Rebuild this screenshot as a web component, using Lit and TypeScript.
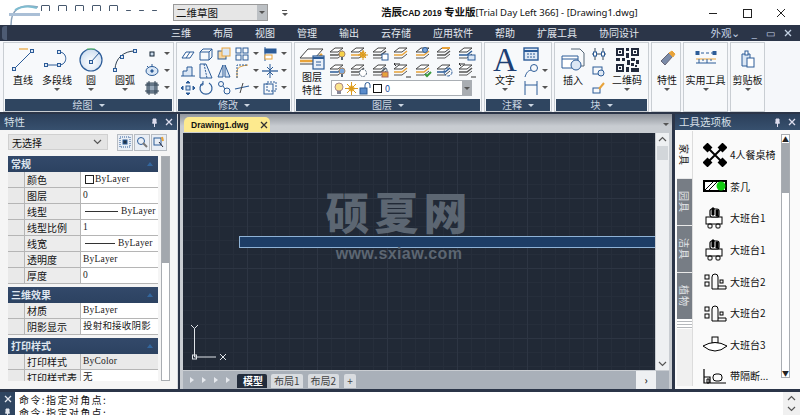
import { LitElement, html, css, svg } from "lit";
import { customElement } from "lit/decorators.js";

const B = "#2c5c98";
const O = "#e8a33a";
const ic = (w: number, h: number, body: unknown) =>
  html`<svg width=${w} height=${h} viewBox="0 0 ${w} ${h}" fill="none" stroke=${B} stroke-width="1">${body}</svg>`;

const dot = (x: number, y: number) => svg`<rect x=${x - 1.5} y=${y - 1.5} width="3" height="3" fill="#dfe9f5" stroke=${B}/>`;

const layer = (accent: string, extra: unknown = svg``) =>
  ic(18, 16, svg`<path d="M1 6 L6 2 H14 L9 6Z" fill="#fff" stroke="#444"/><path d="M1 9 H9 L14 5" stroke=${accent} stroke-width="1.5"/><path d="M1 12 H9 L14 8" stroke="#555"/>${extra}`);

const bulb = (c: string) => svg`<circle cx="13" cy="8" r="3" fill=${c} stroke=${c === "#fff" ? B : "#a86"}/><rect x="12" y="11" width="2" height="3" fill="#567" stroke="none"/>`;
const sun = svg`<circle cx="13" cy="9" r="2.5" fill="#f4b73c" stroke="#d99a20"/><path d="M13 4v10M8 9h10M10 6l6 6M16 6l-6 6" stroke="#d99a20"/>`;
const gear = svg`<circle cx="13" cy="10" r="3.5" fill="#fff" stroke="#567" stroke-dasharray="2 1"/>`;
const lock = svg`<rect x="10" y="9" width="6" height="5" fill="#e8a33a" stroke="#a66"/><path d="M11 9V7a2 2 0 0 1 4 0v2" stroke="#567"/>`;
const box = svg`<rect x="10" y="8" width="6" height="6" fill="#fff" stroke=${B}/>`;
const circ = svg`<circle cx="10" cy="4" r="2.5" fill="#7aa6dc" stroke=${B}/>`;
const check = svg`<path d="M10 11l2 2 4-4" stroke="#3a9a3a" stroke-width="2"/>`;
const bar = svg`<rect x="6" y="1" width="8" height="2" fill=${O} stroke="none"/>`;
const blockR = svg`<rect x="10" y="9" width="7" height="5" fill="#dbe7f5" stroke=${B}/>`;
const swirl = svg`<circle cx="12" cy="9" r="4" stroke=${B} stroke-dasharray="3 1"/>`;
const arrows = svg`<path d="M1 1h6M13 14h5" stroke="#333"/><path d="M3 3L1 1l2-2" stroke="#333"/>`;

const small: Record<string, unknown> = {
  point: ic(14, 14, svg`<rect x="5" y="5" width="4" height="4" fill="#cde" stroke="#123"/>`),
  ellipse: ic(16, 14, svg`<ellipse cx="8" cy="7" rx="6" ry="4.5" fill="#d8e6f5"/><circle cx="8" cy="7" r="1.2" fill=${B}/><path d="M8 0v3M3 2l2 2"/>`),
  hatch: ic(14, 14, svg`<rect x="2" y="2" width="10" height="10" fill="#9ab" stroke="#345"/><path d="M0 4h14M0 10h14M4 0v14M10 0v14" stroke="#345"/>`),
  erase: ic(16, 14, svg`<path d="M2 11 L6 5 H14 L10 11Z" fill="#fff"/><path d="M6 11 L10 5"/>`),
  copy: ic(16, 14, svg`<path d="M2 5h9v8H2zM2 5l3-3h9l-3 3M11 13l3-3V2"/>`),
  mirror: ic(16, 16, svg`<rect x="2" y="5" width="8" height="8" fill="#f6d8a8" stroke=${B}/><rect x="6" y="2" width="8" height="8" fill="#dbe7f5" stroke=${O}/>`),
  array: ic(16, 16, svg`<rect x="2" y="2" width="5" height="5"/><rect x="9" y="2" width="5" height="5"/><rect x="2" y="9" width="5" height="5"/><rect x="9" y="9" width="5" height="5"/>`),
  align: ic(16, 16, svg`<path d="M3 1v14" /><rect x="3" y="3" width="11" height="4" fill=${B}/><rect x="3" y="9" width="7" height="4" fill="#fff" stroke=${O}/>`),
  stretch: ic(16, 14, svg`<path d="M1 12h14M3 12V7h4V3h5v9" fill="#dbe7f5"/>`),
  scale: ic(16, 16, svg`<path d="M2 1v14h12L8 1z" fill="#eef3fa"/><path d="M6 1l3 14" stroke-dasharray="2 1"/>`),
  mir2: ic(16, 16, svg`<path d="M7 2L2 14h5zM9 2l5 12H9z" fill="#dbe7f5"/>`),
  fillet: ic(16, 16, svg`<path d="M3 15V8Q3 3 14 2" stroke=${O}/><path d="M3 15V2h11" stroke-dasharray="2 1"/>`),
  offset: ic(16, 16, svg`<path d="M8 1v14" stroke-width="1"/><path d="M0 8h16" stroke-width="1.3"/><path d="M5 4l3 3 3-3M5 12l3-3 3 3" stroke-width="1"/>`),
  move: ic(16, 16, svg`<rect x="6" y="6" width="4" height="4" fill="#cde"/><path d="M8 1l2 2H6zM8 15l2-2H6zM1 8l2-2v4zM15 8l-2-2v4z" fill=${B}/>`),
  rotate: ic(16, 16, svg`<path d="M5 3a6 6 0 1 0 6 0" stroke-width="1.2"/><path d="M5 1v4H2" />`),
  chain: ic(16, 16, svg`<circle cx="5" cy="4" r="2.5"/><circle cx="11" cy="11" r="3"/><path d="M7 6l2 3"/>`),
  trim: ic(16, 16, svg`<path d="M1 9l14-3" stroke=${B} stroke-width="1.2"/><path d="M9 3l-3 10" stroke="#444"/>`),
  rect: ic(16, 16, svg`<rect x="2" y="4" width="9" height="10"/><rect x="5" y="2" width="9" height="9" stroke-dasharray="2 1"/>`),
  table: ic(16, 14, svg`<rect x="1" y="1" width="14" height="12" fill="#dfe9f5" stroke=${B} stroke-width="1.4"/><path d="M1 4h14" stroke=${B} stroke-width="2"/><path d="M4 7h8M4 10h8" stroke-dasharray="2 1"/>`),
  leader: ic(16, 16, svg`<circle cx="11" cy="5" r="3.5"/><path d="M8 7C4 8 3 11 2 14" />`),
  dim: ic(16, 16, svg`<path d="M2 1v14M14 1v14M2 5h12" />`),
  dimv: ic(14, 14, svg`<path d="M3 1v12M11 1v12M0 7h14" stroke="#345"/><rect x="1.5" y="5" width="3" height="4" fill="#fff"/><rect x="9.5" y="5" width="3" height="4" fill="#fff"/>`),
  edit: ic(14, 14, svg`<rect x="1" y="3" width="9" height="7"/><circle cx="9" cy="9" r="3" fill="#dfe9f5"/>`),
  attr: ic(14, 14, svg`<rect x="1" y="7" width="7" height="5"/><path d="M7 8l5-6" stroke=${O} stroke-width="2"/>`),
};

const big: Record<string, unknown> = {
  line: ic(26, 24, svg`<path d="M4 21 L22 3" stroke=${B}/><path d="M9 1 h9" stroke=${O} stroke-width="1.2"/>${dot(4, 21)}${dot(22, 3)}`),
  pline: ic(28, 24, svg`<path d="M3 17 H16 C25 17 25 4 16 4" stroke=${B}/>${dot(3, 17)}${dot(16, 17)}${dot(16, 4)}`),
  circle: ic(26, 26, svg`<defs><radialGradient id="cg" cx=".5" cy=".6" r=".7"><stop offset="0" stop-color="#fff"/><stop offset="1" stop-color="#c5d8ee"/></radialGradient></defs><circle cx="13" cy="13" r="11" fill="url(#cg)" stroke=${B} stroke-width="1.2"/><path d="M9 2h8" stroke="#6c6"/><path d="M13 15L21 6" stroke=${B}/>${dot(13, 15)}`),
  arc: ic(26, 24, svg`<path d="M3 22 C3 10 12 3 23 3" stroke="#345"/>${dot(3, 22)}${dot(10, 9)}${dot(23, 3)}`),
  layers: ic(26, 24, svg`<path d="M1 12 L9 3 H24 L16 12Z" fill="#fff" stroke="#444"/><path d="M1 15 H16 L23 8" stroke=${O} stroke-width="2.5"/><path d="M1 18H15" stroke="#444"/><rect x="14" y="10" width="11" height="13" fill="#eaf0f8" stroke=${B} stroke-width="1.2"/><path d="M14 12h11" stroke=${B} stroke-width="2"/><path d="M17 16h5M17 19h5" stroke=${B}/>`),
  text: html`<span class="bigA">A</span>`,
  insert: ic(24, 24, svg`<path d="M10 1h9l4 4v13h-6" stroke="#567"/><path d="M1 8h16v12H1z" fill="#fff"/><path d="M1 11h16" stroke=${B}/><circle cx="15" cy="17" r="5" fill="#dbe7f5" />`),
  qr: html`<svg width="23" height="24" viewBox="0 0 23 24" fill="#222a3c"><path d="M0 0h8v8H0zM2 2v4h4V2zM15 0h8v8h-8zM17 2v4h4V2zM0 16h8v8H0zM2 18v4h4v-4zM10 0h3v3h-3zM10 5h3v5h-3zM0 10h4v3H0zM6 10h3v3H6zM15 10h4v3h-4zM20 12h3v4h-3zM11 12h3v5h-3zM15 15h3v3h-3zM10 19h3v5h-3zM15 20h8v4h-8zM19 17h2v2h-2z" fill-rule="evenodd"/><path d="M3 3h2v2H3zM18 3h2v2h-2zM3 19h2v2H3z"/></svg>`,
  prop: ic(18, 18, svg`<path d="M3 11l8-8 4 3-8 9z" fill="#7a8ba8" stroke="#667"/><path d="M11 3l3-2 3 3-2 3z" fill=${O} stroke=${O}/>`),
  util: ic(22, 16, svg`<path d="M1 3h20" stroke-dasharray="3 2"/><rect x="1" y="1.5" width="3" height="3" fill=${B}/><rect x="18" y="1.5" width="3" height="3" fill=${B}/><path d="M1 9h20" stroke=${O}/><path d="M1 13h20"/><path d="M4 9v4M8 9v2M12 9v4M16 9v2"/>`),
  clip: ic(16, 18, svg`<path d="M2 4h8v12H2z" fill="#dbe7f5"/><rect x="5" y="1" width="3" height="4" fill="#fff"/><rect x="7" y="8" width="7" height="9" fill="#fff"/>`),
};

const furn: Record<string, unknown> = {
  dining: html`<svg width="24" height="24" viewBox="0 0 24 24"><path d="M4 4L20 20M20 4L4 20" stroke="#000" stroke-width="2"/><g fill="#000"><rect x="1" y="1" width="7" height="7" transform="rotate(45 4.5 4.5)"/><rect x="16" y="1" width="7" height="7" transform="rotate(45 19.5 4.5)"/><rect x="1" y="16" width="7" height="7" transform="rotate(45 4.5 19.5)"/><rect x="16" y="16" width="7" height="7" transform="rotate(45 19.5 19.5)"/></g></svg>`,
  tea: html`<svg width="24" height="13" viewBox="0 0 24 13"><rect x="1" y="1" width="22" height="10" fill="#fff" stroke="#000" stroke-width="2"/><path d="M2 10L10 2M6 10L14 2" stroke="#000"/><circle cx="18" cy="6" r="4.5" fill="#1c1"/></svg>`,
  desk1: html`<svg width="20" height="22" viewBox="0 0 20 22" fill="none" stroke="#000"><rect x="1" y="10" width="16" height="7" fill="#fff"/><rect x="5" y="2" width="9" height="8" rx="2" fill="#fff" stroke-width="1.2"/><path d="M7 1h2v7H7z M11 3h2v6h-2z" fill="#000"/><rect x="3" y="17" width="4" height="4" rx="1"/><rect x="11" y="17" width="4" height="4" rx="1"/></svg>`,
  desk2: html`<svg width="24" height="18" viewBox="0 0 24 18" fill="none" stroke="#000"><rect x="2" y="3" width="4" height="4"/><rect x="2" y="10" width="4" height="4"/><path d="M9 17V5a3 3 0 0 1 6 0v12M9 17h14v-3h-8"/><rect x="17" y="8" width="3" height="3"/></svg>`,
  desk3: html`<svg width="26" height="16" viewBox="0 0 26 16" fill="none" stroke="#000"><rect x="10" y="1" width="6" height="6"/><path d="M1 10Q13 3 25 10Q13 20 1 10z" fill="#fff"/></svg>`,
  screen: html`<svg width="24" height="16" viewBox="0 0 24 16" fill="none" stroke="#000"><path d="M1 1v14h22M1 9h6v6" stroke-width="1.2"/><rect x="10" y="6" width="9" height="7" rx="3"/><path d="M4 11h2v4H4z"/></svg>`,
};

const PROPS: Array<{ h: string; rows: Array<[string, unknown, boolean?]> }> = [
  { h: "常规", rows: [
    ["颜色", html`<span class="swatch"></span>ByLayer`],
    ["图层", "0"],
    ["线型", html`<span class="ln w38"></span><span class="rt">ByLayer</span>`],
    ["线型比例", "1"],
    ["线宽", html`<span class="ln w31"></span><span class="rt">ByLayer</span>`],
    ["透明度", "ByLayer"],
    ["厚度", "0"],
  ]},
  { h: "三维效果", rows: [["材质", "ByLayer"], ["阴影显示", "投射和接收阴影"]] },
  { h: "打印样式", rows: [["打印样式", "ByColor", true], ["打印样式表", "无"]] },
];

const TOOLS: Array<[string, string]> = [
  ["dining", "4人餐桌椅"], ["tea", "茶几"], ["desk1", "大班台1"], ["desk1", "大班台1"],
  ["desk2", "大班台2"], ["desk2", "大班台2"], ["desk3", "大班台3"], ["screen", "带隔断..."],
];

const MENU = ["三维", "布局", "视图", "管理", "输出", "云存储", "应用软件", "帮助", "扩展工具", "协同设计"];

@customElement("app-root")
export class AppRoot extends LitElement {
  static styles = css`
    :host { display: block; width: 800px; height: 415px; overflow: hidden; background: #2b3548;
      font-family: "Noto Sans CJK SC", "Liberation Sans", sans-serif; font-size: 10px; color: #111; }
    * { box-sizing: border-box; }
    svg { display: block; flex: none; }
    .app { display: flex; flex-direction: column; height: 415px; }

    .title { height: 25px; background: #fff; display: flex; align-items: center; position: relative; flex: none; }
    .logo { width: 33px; height: 25px; margin-left: 8px; flex: none; }
    .qat { display: flex; gap: 8px; width: 132px; height: 6px; overflow: hidden; margin-top: -9px; align-items: flex-start; flex: none; }
    .qat i { display: block; width: 9px; height: 12px; border: 1px solid #48596e; border-radius: 1px; flex: none; }
    .qat i.d { height: 1px; border-width: 1px 0 0; margin-top: 5px; width: 5px; }
    .combo { width: 95px; height: 17px; background: #e6e6e6; border: 1px solid #9a9a9a; display: flex; align-items: center; padding-left: 2px; font-size: 10.5px; justify-content: space-between; flex: none; }
    .combo b { width: 10px; height: 15px; background: #bcc0c4; display: flex; align-items: center; justify-content: center; font-weight: normal; }
    .tri { width: 0; height: 0; border: 3px solid transparent; border-top: 3px solid #555; border-bottom: 0; display: block; flex: none; }
    .more { margin-left: 14px; width: 5px; flex: none; }
    .more::before { content: ""; display: block; height: 2px; border-top: 1px solid #555; }
    .cap { position: absolute; left: 381px; top: 4px; white-space: nowrap; font-size: 10px; line-height: 16px; }
    .cap b { font-size: 10.5px; }
    .cap b em { font: bold 8.5px "Liberation Sans", sans-serif; }
    .cap span { font-family: "Noto Sans", "Liberation Sans", sans-serif; font-size: 9.5px; }
    .win { margin-left: auto; display: flex; align-items: center; flex: none; }
    .win svg { margin-left: 24px; }
    .win svg.lastw { margin-right: 14px; }

    .menu { height: 16px; background: #2b3548; color: #e3e8ef; display: flex; align-items: center; padding-left: 171px; gap: 22px; flex: none; position: relative; line-height: 16px; }
    .menu .edge { position: absolute; left: 2px; top: 1px; width: 5px; height: 14px; background: #4d5b73; border-radius: 3px 0 0 3px; }
    .wnd { margin-left: auto; display: flex; align-items: center; gap: 9px; padding-right: 8px; color: #c4d2e4; }
    .wnd .look { font-size: 10.5px; margin-right: 2px; }

    .ribbon { height: 72px; background: #f5f7fa; display: flex; gap: 2px; padding: 1px 0 0 3px; flex: none; border-bottom: 1px solid #2b3548; }
    .panel { border: 1px solid #c9ced3; background: #f7f9fb; display: flex; flex-direction: column; flex: none; }
    .pbody { flex: 1; display: flex; padding: 2px 2px 0; min-height: 0; }
    .pbody.flush { padding-left: 0; padding-right: 0; }
    .plabel { height: 12px; background: #2f4560; color: #ccd6e2; display: flex; align-items: center; justify-content: center; gap: 6px; line-height: 12px; margin: 0 1px; flex: none; }
    .plabel .tri { border-top-color: #ccd6e2; }
    .p1 { width: 171px; } .p2 { width: 116px; } .p3 { width: 188px; } .p4 { width: 68px; }
    .p5 { width: 95px; } .p6 { width: 30px; } .p7 { width: 45px; } .p8 { width: 35px; }
    .bigb { display: flex; flex-direction: column; align-items: center; width: 34px; flex: none; line-height: 13px; white-space: nowrap; }
    .ic { height: 27px; display: flex; align-items: center; justify-content: center; margin-top: 1px; flex: none; }
    .ic.short { height: 24px; }
    .ic.top { align-items: flex-start; padding-top: 4px; }
    .bigb label { display: block; }
    .bigb .tri { margin-top: 2px; }
    .w26 { width: 26px; } .w29 { width: 29px; } .w30 { width: 30px; } .w36 { width: 36px; } .w39 { width: 39px; } .w40 { width: 40px; }
    .cols { display: grid; grid-auto-rows: 17px; align-items: center; justify-items: center; }
    .c-draw { grid-template-columns: 18px 12px; margin-left: 1px; }
    .c-mod { grid-template-columns: 18px 18px 18px 18px 10px 18px 10px; }
    .c-ann { grid-template-columns: 16px 12px; }
    .c-blk { grid-template-columns: 16px; }
    .layers { display: flex; flex-direction: column; }
    .lgrid { display: grid; grid-template-columns: repeat(7, 21.5px); grid-auto-rows: 17px; justify-items: center; align-items: center; }
    .ldrop { margin: 1px 0 0 4px; width: 141px; height: 16px; border: 1px solid #a9aeb4; background: #fff; display: flex; align-items: center; gap: 1px; padding-left: 2px; font-size: 9px; color: #1a4fa0; }
    .ldrop .sq { width: 9px; height: 9px; border: 1px solid #111; background: #fff; margin-right: 2px; }
    .ldrop b { margin-left: auto; width: 9px; height: 14px; background: #a9adb2; display: flex; align-items: center; justify-content: center; }
    .bigA { font: 33px/28px "Liberation Serif", serif; color: #1d3f73; }
    .ln2 { line-height: 13px; text-align: center; white-space: normal; width: 22px; }

    .main { flex: 1; display: flex; min-height: 0; background: #2b3548; padding-top: 1px; }
    .dock { display: flex; flex-direction: column; flex: none; background: #f2f2f2; }
    .left { width: 178px; border-right: 1px solid #d8dbe0; }
    .dhead { height: 16px; background: linear-gradient(#2b3f5a, #37506e); color: #d8e0ea; display: flex; align-items: center; padding: 0 4px; font-size: 10.5px; line-height: 16px; flex: none; }
    .dhead .pin { margin-left: auto; display: flex; gap: 7px; align-items: center; }
    .lbody { flex: 1; display: flex; flex-direction: column; padding: 4px 8px 8px 8px; min-height: 0; background: #f5f5f5; }
    .selrow { display: flex; align-items: center; height: 16px; margin-bottom: 6px; flex: none; }
    .sel { width: 100px; height: 16px; background: #e4e4e4; border: 1px solid #d0d0d0; display: flex; align-items: center; padding: 0 5px 0 3px; justify-content: space-between; }
    .sbtns { display: flex; margin-left: 9px; gap: 1px; }
    .sbtns span { width: 16px; height: 17px; background: #e9eef5; border: 1px solid #b7bcc2; display: flex; align-items: center; justify-content: center; }
    .propwrap { flex: 1; display: flex; min-height: 0; gap: 3px; }
    .grid { width: 150px; flex: none; overflow: hidden; }
    .ghead { height: 16px; background: linear-gradient(#33496a, #2c4261); color: #dfe6ef; font-weight: bold; display: flex; align-items: center; justify-content: space-between; padding: 0 5px 0 3px; line-height: 16px; font-size: 10px; }
    .ghead i { width: 0; height: 0; border: 3px solid transparent; border-bottom: 4px solid #33669e; border-top: 0; }
    .gsec { margin-bottom: 3px; }
    .row { display: flex; height: 16px; border-bottom: 1px solid #b5b5b5; background: #e9e9e9; padding-left: 16px; line-height: 15px; }
    .row .k { width: 57px; padding-left: 2px; border-left: 1px solid #b5b5b5; border-right: 1px solid #b5b5b5; flex: none; background: #ececec; }
    .row .v { flex: 1; background: #fff; padding-left: 2px; font-family: "Liberation Serif", "Noto Sans CJK SC", serif; font-size: 9.5px; letter-spacing: .2px; display: flex; align-items: center; white-space: nowrap; overflow: hidden; color: #222; }
    .row.gr .v { background: #e9e9e9; }
    .swatch { width: 9px; height: 9px; border: 1px solid #222; margin: 0 1px 0 2px; }
    .ln { height: 1px; background: #333; margin-left: 2px; flex: none; }
    .w38 { width: 33px; } .w31 { width: 30px; }
    .rt { margin-left: 3px; }
    .sb { width: 9px; flex: none; background: #fff; border: 1px solid #a9adb2; }
    .sb::before { content: ""; display: block; height: 106px; background: #a3a8ae; }

    .center { flex: 1; margin-left: 2px; margin-right: 3px; display: flex; flex-direction: column; min-width: 0; background: linear-gradient(#8f949c, #c8ccd1 12px, #c9cdd2); }
    .tabs { height: 18px; display: flex; align-items: flex-end; padding-left: 4px; flex: none; justify-content: space-between; }
    .tabs .dd { margin: 0 3px 6px 0; }
    .doc { width: 86px; height: 15px; background: #fdea8e; border-radius: 5px 5px 0 0; display: flex; align-items: center; justify-content: space-between; padding: 0 2px 0 7px; font-family: "Liberation Sans", sans-serif; font-size: 8.5px; font-weight: bold; }
    .canvaswrap { flex: 1; display: flex; padding: 1px 3px 0; min-height: 0; }
    .canvas { flex: 1; position: relative; overflow: hidden; background-color: #212936;
      background-image:
        linear-gradient(90deg, #2d3543 1px, transparent 1px),
        linear-gradient(#2d3543 1px, transparent 1px),
        linear-gradient(90deg, #262e3b 1px, transparent 1px),
        linear-gradient(#262e3b 1px, transparent 1px);
      background-size: 70px 70px, 70px 70px, 14px 14px, 14px 14px;
      background-position: -6px -5px; }
    .vs { width: 13px; margin-left: 1px; background: #eef0f2; display: flex; flex-direction: column; align-items: center; justify-content: space-between; padding: 3px 0; flex: none; position: relative; }
    .vs .th { position: absolute; left: 1px; right: 1px; top: 13px; height: 14px; background: #d2d6da; }
    .bar { position: absolute; left: 56px; right: 0; top: 103px; height: 12px; background: #1d3d66; border: 1px solid #8fb2d6; border-right: 0; }
    .mark { position: absolute; left: 142px; top: 50px; width: 148px; text-align: center; color: #5c6672; }
    .mark h1 { margin: 0; font-size: 44px; line-height: 56px; font-weight: 900; letter-spacing: 5px; white-space: nowrap; }
    .mark p { margin: 6px 0 0; font: bold 16px/18px "Liberation Sans", sans-serif; letter-spacing: .4px; white-space: nowrap; }
    .ucs { position: absolute; left: 6px; top: 191px; }
    .ltabs { height: 18px; display: flex; align-items: center; flex: none; padding-left: 4px; background: #a9b0b9; position: relative; margin: 1px 3px 0; color: #333; }
    .nav { display: flex; gap: 8px; width: 50px; padding-left: 3px; }
    .nav i { width: 4px; height: 6px; border-left: 4px solid #e6e9ee; border-top: 3px solid transparent; border-bottom: 3px solid transparent; }
    .lt { height: 14px; line-height: 14px; padding: 0 3px; background: #d9dce0; border-radius: 2px 2px 0 0; margin-right: 5px; margin-top: 2px; color: #444; }
    .lt.on { background: #222c3c; color: #fff; font-weight: bold; padding: 0 4px 0 6px; margin-right: 4px; }
    .ltabs .gt { margin-left: auto; width: 20px; text-align: center; font-weight: bold; color: #333; background: #eef0f2; height: 100%; margin-right: 13px; line-height: 18px; }

    .right { width: 125px; background: #f5f5f5; }
    .rbody { flex: 1; display: flex; min-height: 0; padding: 1px 0 3px 2px; background: #fafafa; overflow: hidden; }
    .vt { width: 15px; flex: none; display: flex; flex-direction: column; background: #f0f0f0; }
    .vt span { writing-mode: vertical-rl; text-orientation: sideways; display: flex; align-items: center; justify-content: center; background: #777d85; color: #e4e6ea; border-top: 1px solid #e8e8e8; line-height: 15px; font-size: 10px; letter-spacing: 1px; flex: none; height: 47px; }
    .vt span.on { background: #fafafa; color: #222; border: 0; }
    .vt .st { height: 10px; background: repeating-linear-gradient(#fff 0 2px, #b5b8bc 2px 3px); flex: none; }
    .tools { flex: 1; display: flex; flex-direction: column; overflow: hidden; padding-top: 8px; border-left: 1px solid #dcdcdc; }
    .titem { height: 31.6px; display: flex; align-items: center; flex: none; white-space: nowrap; font-size: 10px; }
    .titem .tic { width: 37px; display: flex; justify-content: center; padding-left: 6px; flex: none; }
    .rsb { width: 9px; margin: 3px 10px 8px 0; flex: none; background: #fff; border: 1px solid #a9adb2; display: flex; flex-direction: column; align-items: center; justify-content: space-between; position: relative; }
    .rsb .t { height: 50px; width: 7px; background: #a3a8ae; position: absolute; top: 8px; left: 0; }
    .arr { font-size: 7px; line-height: 8px; height: 8px; color: #222; }

    .cmd { height: 26px; flex: none; display: flex; background: #fff; border-top: 3px solid #2b3548; }
    .cmdl { width: 15px; background: #2f4560; color: #e4e8ef; display: flex; flex-direction: column; align-items: center; gap: 5px; padding-top: 3px; flex: none; }
    .cmdt { flex: 1; padding: 1px 0 0 4px; line-height: 13px; letter-spacing: 1.4px; overflow: hidden; font-size: 10px; }
    .cmdt div { height: 13px; white-space: nowrap; }
    .cmds { width: 17px; background: #f0f0f0; color: #555; display: flex; flex-direction: column; align-items: center; justify-content: space-between; flex: none; padding: 3px 0; }
  `;

  private icw(c: unknown, cls = "") { return html`<div class="ic ${cls}">${c}</div>`; }

  render() {
    const chev = (up: boolean) => html`<svg width="9" height="6" viewBox="0 0 9 6" fill="none" stroke="#555" stroke-width="1.2"><path d=${up ? "M1 5L4.5 1.5L8 5" : "M1 1L4.5 4.5L8 1"}/></svg>`;
    const x = (c: string) => html`<svg width="8" height="8" viewBox="0 0 8 8" stroke=${c} stroke-width="1.3"><path d="M1 1L7 7M7 1L1 7"/></svg>`;
    const pin = (c: string) => html`<svg width="7" height="9" viewBox="0 0 7 9" fill=${c} stroke=${c}><path d="M2 1h3v4H2zM1 5h5M3.5 5v4" /></svg>`;
    const tri = html`<i class="tri"></i>`;
    const labelBar = (t: string) => html`<div class="plabel">${t}${tri}</div>`;
    return html`<div class="app">
      <div class="title">
        <svg class="logo" viewBox="0 0 33 25" fill="none"><path d="M3 25 C3 10 11 3 30 7" stroke="#8aa2ba" stroke-width="1.5"/><path d="M1 14.5h31" stroke="#aabfd6" stroke-width="3"/><path d="M7 10 q10-6 22-2" stroke="#7fbcd0" stroke-width="2"/></svg>
        <div class="qat"><i></i><i></i><i></i><i></i><i></i><i class="d"></i><i class="d"></i><i class="d"></i></div>
        <div class="combo">二维草图<b>${tri}</b></div>
        <div class="more">${tri}</div>
        <div class="cap"><b>浩辰<em>CAD 2019 </em>专业版</b><span>[Trial Day Left 366] - [Drawing1.dwg]</span></div>
        <div class="win">
          <svg width="10" height="10" viewBox="0 0 10 10" stroke="#222"><path d="M1 5.5H9"/></svg>
          <svg width="10" height="10" viewBox="0 0 10 10" stroke="#222" fill="none"><rect x="1.5" y="1.5" width="8" height="8"/></svg>
          <svg class="lastw" width="10" height="10" viewBox="0 0 10 10" stroke="#222"><path d="M1 1L9 9M9 1L1 9"/></svg>
        </div>
      </div>
      <div class="menu"><i class="edge"></i>${MENU.map((m) => html`<span>${m}</span>`)}
        <div class="wnd"><span class="look">外观⌄</span><span>_</span><span>▭</span>${x("#c4d2e4")}</div>
      </div>
      <div class="ribbon">
        <div class="panel p1"><div class="pbody">
          <div class="bigb">${this.icw(big.line)}<label>直线</label></div>
          <div class="bigb">${this.icw(big.pline)}<label>多段线</label>${tri}</div>
          <div class="bigb">${this.icw(big.circle)}<label>圆</label>${tri}</div>
          <div class="bigb">${this.icw(big.arc)}<label>圆弧</label>${tri}</div>
          <div class="cols c-draw">${small.point}${tri}${small.ellipse}${tri}${small.hatch}${tri}</div>
        </div>${labelBar("绘图")}</div>
        <div class="panel p2"><div class="pbody">
          <div class="cols c-mod">
            ${small.erase}${small.copy}${small.mirror}${small.array}${tri}${small.align}${tri}
            ${small.stretch}${small.scale}${small.mir2}${small.fillet}${tri}${small.offset}${tri}
            ${small.move}${small.rotate}${small.chain}${small.trim}${tri}${small.rect}${tri}
          </div>
        </div>${labelBar("修改")}</div>
        <div class="panel p3"><div class="pbody">
          <div class="bigb w30">${this.icw(big.layers, "short")}<label class="ln2">图层特性</label></div>
          <div class="layers">
            <div class="lgrid">
              ${layer("#555", bulb("#f6d24a"))}${layer(O, sun)}${layer("#555", box)}${layer(O)}${layer(O, circ)}${layer("#555", bar)}${layer(B, blockR)}
              ${layer(B, bulb("#7aa6dc"))}${layer("#555", gear)}${layer("#555", lock)}${layer(O, arrows)}${layer(O, check)}${layer(B, swirl)}${layer("#555", arrows)}
            </div>
            <div class="ldrop">
              <svg width="10" height="13" viewBox="0 0 10 13"><circle cx="5" cy="5" r="4" fill="#fbe38c" stroke="#a88"/><rect x="3" y="9" width="4" height="3" fill="#889"/></svg>
              <svg width="13" height="13" viewBox="0 0 13 13"><circle cx="6.5" cy="6.5" r="3" fill="#f4b73c"/><path d="M6.5 0v13M0 6.5h13M2 2l9 9M11 2l-9 9" stroke="#d99a20"/></svg>
              <svg width="13" height="13" viewBox="0 0 13 13" fill="none" stroke=${B}><rect x="1" y="6" width="7" height="6" fill="#5a8ccc"/><path d="M6 6V3a2.5 2.5 0 0 1 5 0v3"/></svg>
              <span class="sq"></span>0<b>${tri}</b>
            </div>
          </div>
        </div>${labelBar("图层")}</div>
        <div class="panel p4"><div class="pbody">
          <div class="bigb w36">${this.icw(big.text)}<label>文字</label>${tri}</div>
          <div class="cols c-ann">${small.table}<span></span>${small.leader}${tri}${small.dim}${tri}</div>
        </div>${labelBar("注释")}</div>
        <div class="panel p5"><div class="pbody flush">
          <div class="bigb w36">${this.icw(big.insert)}<label>插入</label></div>
          <div class="cols c-blk">${small.dimv}${small.edit}${small.attr}</div>
          <div class="bigb w40">${this.icw(big.qr)}<label>二维码</label>${tri}</div>
        </div>${labelBar("块")}</div>
        <div class="panel p6"><div class="pbody"><div class="bigb w26">${this.icw(big.prop, "top")}<label>特性</label>${tri}</div></div></div>
        <div class="panel p7"><div class="pbody"><div class="bigb w39">${this.icw(big.util, "top")}<label>实用工具</label>${tri}</div></div></div>
        <div class="panel p8"><div class="pbody"><div class="bigb w29">${this.icw(big.clip, "top")}<label>剪贴板</label>${tri}</div></div></div>
      </div>
      <div class="main">
        <div class="dock left">
          <div class="dhead">特性<span class="pin">${pin("#dde")}${x("#dde")}</span></div>
          <div class="lbody">
            <div class="selrow">
              <div class="sel">无选择${chev(false)}</div>
              <div class="sbtns">
                <span><svg width="12" height="12" viewBox="0 0 12 12" fill="none" stroke=${B}><rect x="1" y="1" width="10" height="10" stroke-dasharray="1 1"/><rect x="4" y="4" width="4" height="4" fill="#234"/></svg></span>
                <span><svg width="12" height="12" viewBox="0 0 12 12" fill="none" stroke=${B}><circle cx="5" cy="5" r="3.5"/><path d="M7 7l4 4" stroke="#777" stroke-width="2"/></svg></span>
                <span><svg width="12" height="12" viewBox="0 0 12 12" fill="none" stroke=${B}><rect x="1" y="2" width="7" height="7"/><path d="M6 6l4 5" stroke="#223"/><path d="M9 1l1 4" stroke=${O} stroke-width="2"/></svg></span>
              </div>
            </div>
            <div class="propwrap">
              <div class="grid">${PROPS.map((s) => html`<div class="gsec">
                <div class="ghead">${s.h}<i></i></div>
                ${s.rows.map((r) => html`<div class="row ${r[2] ? "gr" : ""}"><span class="k">${r[0]}</span><span class="v">${r[1]}</span></div>`)}
              </div>`)}</div>
              <div class="sb"></div>
            </div>
          </div>
        </div>
        <div class="center">
          <div class="tabs"><div class="doc">Drawing1.dwg${x("#333")}</div><span class="dd">${tri}</span></div>
          <div class="canvaswrap">
            <div class="canvas">
              <div class="bar"></div>
              <div class="mark"><h1>硕夏网</h1><p>www.sxiaw.com</p></div>
              <svg class="ucs" width="42" height="42" viewBox="0 0 42 42" fill="none" stroke="#dfe3e8"><path d="M5.5 6V33H27"/><rect x="3.5" y="31" width="4" height="4"/><path d="M2 1L5.5 4.5L9 1M5.5 4.5V9M31 30L37 36M37 30L31 36" /></svg>
            </div>
            <div class="vs"><span class="th"></span>${chev(true)}${chev(false)}</div>
          </div>
          <div class="ltabs">
            <div class="nav"><i></i><i></i><i></i><i></i></div>
            <span class="lt on">模型</span><span class="lt">布局1</span><span class="lt">布局2</span><span class="lt">+</span>
            <span class="gt">›</span>
          </div>
        </div>
        <div class="dock right">
          <div class="dhead">工具选项板<span class="pin">${pin("#dde")}${x("#dde")}</span></div>
          <div class="rbody">
            <div class="vt">
              <span class="on">家具</span>
              <span>园具</span>
              <span>洁具</span>
              <span>植物</span>
              <div class="st"></div>
            </div>
            <div class="tools">${TOOLS.map(([k, t]) => html`<div class="titem"><span class="tic">${furn[k]}</span>${t}</div>`)}</div>
            <div class="rsb"><span class="t"></span><span class="arr">▲</span><span class="arr">▼</span></div>
          </div>
        </div>
      </div>
      <div class="cmd">
        <div class="cmdl">${x("#e4e8ef")}${pin("#e4e8ef")}</div>
        <div class="cmdt"><div>命令:指定对角点:</div><div>命令:指定对角点:</div></div>
        <div class="cmds">${chev(true)}${chev(false)}</div>
      </div>
    </div>`;
  }
}
